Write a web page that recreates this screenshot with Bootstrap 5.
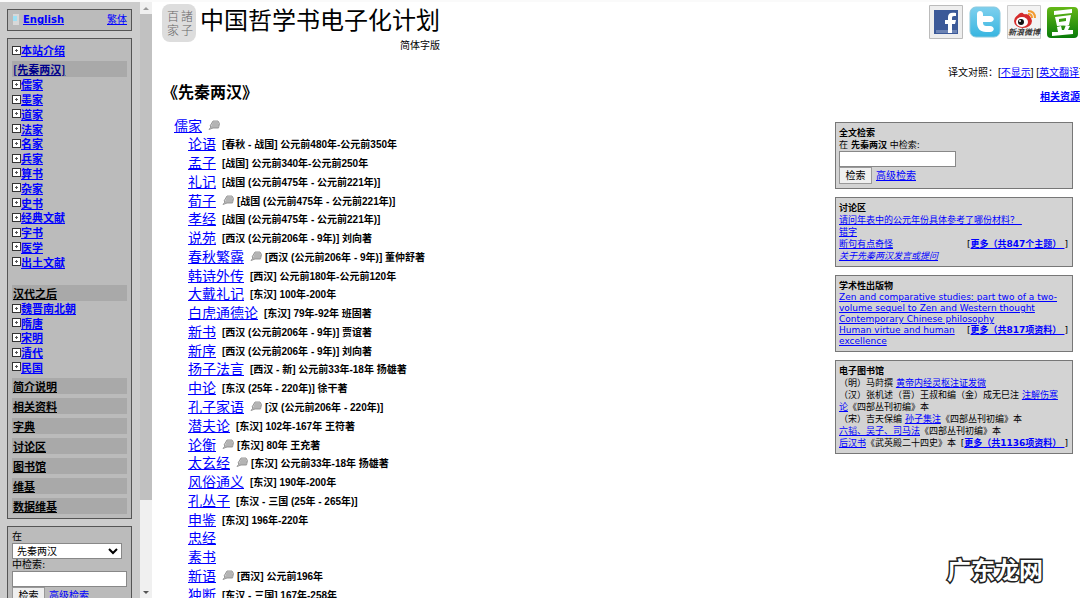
<!DOCTYPE html>
<html lang="zh-Hans">
<head>
<meta charset="utf-8">
<meta name="viewport" content="width=device-width, initial-scale=1">
<title>先秦两汉 - 中国哲学书电子化计划</title>
<link href="https://cdn.jsdelivr.net/npm/bootstrap@5.3.0/dist/css/bootstrap.min.css" rel="stylesheet">
<style>
body{font-family:"DejaVu Sans","Noto Sans CJK SC",sans-serif;font-size:10px;line-height:12px;color:#000;border-top:2px solid #fafafa}
a{color:#00f}
ul{list-style:none;margin:0;padding:0}
/* side navigation */
.side{width:140px;background:#ccc;padding:7px 8px 0 7px}
.side-box{background:#bbb;border:1px solid #555;width:125px;padding:4px;margin-bottom:7px}
.side-box.lang{height:22px;padding:0 4px}
.nodes{display:grid;grid-auto-rows:1fr;font-size:11px;font-weight:700;line-height:14px;font-family:"Noto Sans CJK SC",sans-serif}
.nodes li{display:flex;align-items:center}
.nodes-a{min-height:192px}
.nodes-b{min-height:73px}
.nodes li::before{content:"";flex:none;width:9px;height:9px;border:1px solid #333;
 background:linear-gradient(#555,#555) 50% 50%/3px 1px no-repeat,linear-gradient(#555,#555) 50% 50%/1px 3px no-repeat,#fff}
.bar{display:block;background:#a9a9a9;color:#000;font:700 11px/16px "Noto Sans CJK SC",sans-serif;padding-left:1px;margin-bottom:4px}
.bar.tight{margin-bottom:0}
.bar.current{color:#00008b}
.track{width:12px;background:#f0f0f0}
.thumb{background:#c1c1c1;height:85%}
.field{border:1px solid #888;border-radius:0;background:#fff;font:10px/12px "DejaVu Sans","Noto Sans CJK SC",sans-serif;padding:0 2px;display:block;height:16px}
select.field{width:110px;padding:0}
.query{width:117px}
.push{border:1px solid #999;background:#efefef;font:10px/12px "DejaVu Sans","Noto Sans CJK SC",sans-serif;padding:0;width:33px;height:17px}
/* page */
.zh{font-family:"Liberation Sans","Noto Sans CJK SC",sans-serif;padding-left:10px}
.site-title{font:400 24px/34px "Noto Sans CJK SC",sans-serif;margin:0}
.logo{width:34px;height:38px;margin-top:2px}
.page-title{font:700 16px/22px "Noto Sans CJK SC",sans-serif;margin:0}
.listing{padding:14px 0 0 12px}
.works{display:grid;grid-auto-rows:1fr;min-height:469px;padding-left:14px}
.works li,.school{white-space:nowrap;line-height:18px;display:flex;align-items:center}
.works a,.school a{font:400 14px/18px "Noto Sans CJK SC",sans-serif}
.works b{font:700 10px/14px "Liberation Sans","Noto Sans CJK SC",sans-serif;margin-left:6px;padding-top:4px}
.works svg,.school svg{width:12px;height:10px;margin-left:6px;flex:none}
.works svg + b{margin-left:3px}
.right{width:245px}
.social{gap:5px;padding-top:3px}
.social svg{width:34px;height:34px;display:block}
.tools{width:132px;font-size:10px;white-space:nowrap}
.panels{font-family:"DejaVu Sans","Noto Sans CJK SC",sans-serif;padding-top:3px}
.panel{background:#d3d3d3;border:1px solid #777;padding:4px 4px 4px 3px;margin:0 7px 8px 0;font-size:9px;line-height:12px}
.panel h2{font:700 9px/12px "Noto Sans CJK SC",sans-serif;margin:0}
.latin{line-height:11px}
.big{font-size:10px}
.watermark{right:37px;bottom:12px;font:700 24px/34px "Noto Sans CJK SC",sans-serif;color:#fff;-webkit-text-stroke:3px #222;paint-order:stroke fill;stroke-linejoin:round}
</style>
</head>
<body class="vh-100 overflow-hidden position-relative d-flex">
<svg class="d-none" aria-hidden="true"><symbol id="talk" viewBox="0 0 12 10"><path d="M5 1h5l1.500 2.500L10.500 8H5L1 9.500l2-2.500L2 6z" fill="#ccc" stroke="#999" stroke-width="1"/><path d="M4.500 3h6M4 5h7M3 7h7" stroke="#888" stroke-width=".7"/></symbol></svg>

<aside class="side flex-shrink-0 overflow-hidden">
 <div class="side-box lang d-flex align-items-center">
  <svg width="7" height="12" viewBox="0 0 7 12" class="me-1" aria-hidden="true"><path d="M1 0h6v11H1z" fill="#d8d8d8"/><path d="M1 2h4v5H1z" fill="#9de0f5"/></svg>
  <a href="#" class="fw-bold me-auto">English</a><a href="#">繁体</a>
 </div>
 <nav class="side-box">
  <ul class="nodes pb-1"><li><a href="#">本站介绍</a></li></ul>
  <a href="#" class="bar tight current">[先秦两汉]</a>
  <ul class="nodes nodes-a">
   <li><a href="#">儒家</a></li><li><a href="#">墨家</a></li><li><a href="#">道家</a></li><li><a href="#">法家</a></li><li><a href="#">名家</a></li><li><a href="#">兵家</a></li><li><a href="#">算书</a></li><li><a href="#">杂家</a></li><li><a href="#">史书</a></li><li><a href="#">经典文献</a></li><li><a href="#">字书</a></li><li><a href="#">医学</a></li><li><a href="#">出土文献</a></li>
  </ul>
  <a href="#" class="bar tight mt-3">汉代之后</a>
  <ul class="nodes nodes-b mb-1">
   <li><a href="#">魏晋南北朝</a></li><li><a href="#">隋唐</a></li><li><a href="#">宋明</a></li><li><a href="#">清代</a></li><li><a href="#">民国</a></li>
  </ul>
  <a href="#" class="bar">简介说明</a><a href="#" class="bar">相关资料</a><a href="#" class="bar">字典</a><a href="#" class="bar">讨论区</a><a href="#" class="bar">图书馆</a><a href="#" class="bar">维基</a><a href="#" class="bar mb-0">数据维基</a>
 </nav>
 <form class="side-box">
  <label for="scope" class="d-block">在</label>
  <select id="scope" class="field"><option>先秦两汉</option></select>
  <label for="sideq" class="d-block">中检索:</label>
  <input id="sideq" type="text" class="field w-100">
  <div class="d-flex align-items-center gap-1"><button type="button" class="push">检索</button><a href="#">高级检索</a></div>
 </form>
</aside>
<div class="track flex-shrink-0 d-flex flex-column" aria-hidden="true">
 <svg width="12" height="12" viewBox="0 0 12 12"><path d="M3 8l3-3 3 3z" fill="#999"/></svg>
 <div class="flex-grow-1"><div class="thumb"></div></div>
 <svg width="12" height="12" viewBox="0 0 12 12"><path d="M3 5h6L6 8z" fill="#555"/></svg>
</div>

<main class="flex-grow-1 zh d-flex">
 <div class="flex-grow-1">
  <header class="d-inline-flex">
   <svg class="logo me-1" viewBox="0 0 34 38" role="img" aria-label="诸子百家"><rect width="34" height="38" rx="8" fill="#ddd"/><g font-family="Noto Sans CJK TC, sans-serif" font-size="12" font-weight="300" fill="#666"><text x="5" y="17">百</text><text x="19" y="17">諸</text><text x="5" y="31">家</text><text x="19" y="31">子</text></g></svg>
   <div class="text-end"><h1 class="site-title">中国哲学书电子化计划</h1><div class="pt-1">简体字版</div></div>
  </header>
  <h2 class="page-title mt-4 pt-1">《先秦两汉》</h2>
  <div class="listing">
   <div class="school"><a href="#">儒家</a><svg><use href="#talk"/></svg></div>
   <ul class="works">
    <li><a href="#">论语</a><b>[春秋 - 战国] 公元前480年-公元前350年</b></li>
    <li><a href="#">孟子</a><b>[战国] 公元前340年-公元前250年</b></li>
    <li><a href="#">礼记</a><b>[战国 (公元前475年 - 公元前221年)]</b></li>
    <li><a href="#">荀子</a><svg><use href="#talk"/></svg><b>[战国 (公元前475年 - 公元前221年)]</b></li>
    <li><a href="#">孝经</a><b>[战国 (公元前475年 - 公元前221年)]</b></li>
    <li><a href="#">说苑</a><b>[西汉 (公元前206年 - 9年)] 刘向著</b></li>
    <li><a href="#">春秋繁露</a><svg><use href="#talk"/></svg><b>[西汉 (公元前206年 - 9年)] 董仲舒著</b></li>
    <li><a href="#">韩诗外传</a><b>[西汉] 公元前180年-公元前120年</b></li>
    <li><a href="#">大戴礼记</a><b>[东汉] 100年-200年</b></li>
    <li><a href="#">白虎通德论</a><b>[东汉] 79年-92年 班固著</b></li>
    <li><a href="#">新书</a><b>[西汉 (公元前206年 - 9年)] 贾谊著</b></li>
    <li><a href="#">新序</a><b>[西汉 (公元前206年 - 9年)] 刘向著</b></li>
    <li><a href="#">扬子法言</a><b>[西汉 - 新] 公元前33年-18年 扬雄著</b></li>
    <li><a href="#">中论</a><b>[东汉 (25年 - 220年)] 徐干著</b></li>
    <li><a href="#">孔子家语</a><svg><use href="#talk"/></svg><b>[汉 (公元前206年 - 220年)]</b></li>
    <li><a href="#">潜夫论</a><b>[东汉] 102年-167年 王符著</b></li>
    <li><a href="#">论衡</a><svg><use href="#talk"/></svg><b>[东汉] 80年 王充著</b></li>
    <li><a href="#">太玄经</a><svg><use href="#talk"/></svg><b>[东汉] 公元前33年-18年 扬雄著</b></li>
    <li><a href="#">风俗通义</a><b>[东汉] 190年-200年</b></li>
    <li><a href="#">孔丛子</a><b>[东汉 - 三国 (25年 - 265年)]</b></li>
    <li><a href="#">申鉴</a><b>[东汉] 196年-220年</b></li>
    <li><a href="#">忠经</a></li>
    <li><a href="#">素书</a></li>
    <li><a href="#">新语</a><svg><use href="#talk"/></svg><b>[西汉] 公元前196年</b></li>
    <li><a href="#">独断</a><b>[东汉 - 三国] 167年-258年</b></li>
   </ul>
  </div>
 </div>

 <div class="right flex-shrink-0">
  <div class="social d-flex justify-content-end">
   <a href="#" aria-label="Facebook"><svg viewBox="0 0 34 34"><path d="M.5.5h33v33H.5z" fill="#eee" stroke="#bbb"/><path d="M5 5h24v24H5z" fill="#3b5998"/><path d="M7 25h21v3H7z" fill="#6d84b4"/><path d="M19 28V19h-3v-4h3v-3c0-4 3-5 8-4v3c-3 0-4 0-4 2v2h4l-1 4h-3v9z" fill="#fff"/></svg></a>
   <a href="#" aria-label="Twitter"><svg viewBox="0 0 34 34"><defs><linearGradient id="tw" x2="0" y2="1"><stop stop-color="#7ed0ee"/><stop offset="1" stop-color="#37b5e0"/></linearGradient></defs><rect x="2" y="2" width="30" height="30" rx="6" fill="url(#tw)" stroke="#8ac8dd"/><path d="M9 9c0-4 6-4 6 0v2h7c5 0 5 6 0 6h-7c0 3 1 4 4 4h3c5 0 5 6 0 6h-4c-6 0-9-4-9-9z" fill="#fff"/></svg></a>
   <a href="#" aria-label="新浪微博"><svg viewBox="0 0 34 34"><path d="M.5.5h33v33H.5z" fill="#f3f3f3" stroke="#ccc"/><ellipse cx="16" cy="16" rx="9" ry="7" fill="#d52b2b"/><path d="M9 13q3-6 7-5l1 2q5-2 6 2" fill="#d52b2b"/><ellipse cx="15" cy="17" rx="6" ry="5" fill="#fff"/><circle cx="14" cy="17" r="3" fill="#111"/><circle cx="13" cy="16" r="1" fill="#fff"/><path d="M21 9q4 0 4 4M21 6q7 0 7 7" fill="none" stroke="#f39b31" stroke-width="2"/><text x="1" y="30" font-family="Noto Sans CJK SC" font-size="8" font-weight="700" font-style="italic" fill="#333">新浪微博</text></svg></a>
   <a href="#" aria-label="豆瓣"><svg viewBox="0 0 34 34"><defs><linearGradient id="db" x2="0" y2="1"><stop stop-color="#65b817"/><stop offset="1" stop-color="#087b09"/></linearGradient></defs><rect x="1" y="2" width="31" height="31" rx="4" fill="url(#db)"/><path fill-rule="evenodd" d="M8 6l18-2v4L8 10zM9 12l16-2-2 10-12 1zM13 14v3l7-1v-3zM11 22l4-1 1 4h2l2-5 4 1-2 4h5v4L6 31v-4h6z" fill="#fff"/></svg></a>
  </div>
  <div class="tools ms-auto mt-4 pt-1"><div>译文对照：[<a href="#">不显示</a>] [<a href="#">英文翻译</a>]</div></div>
  <div class="text-end mt-2 pt-1 mb-3"><a href="#" class="fw-bold">相关资源</a></div>

  <div class="panels">
   <form class="panel">
    <h2>全文检索</h2>
    <label for="q" class="d-block">在 <b>先秦两汉</b> 中检索:</label>
    <input id="q" type="text" class="field query">
    <div class="d-flex align-items-center gap-1"><button type="button" class="push">检索</button><a href="#" class="big">高级检索</a></div>
   </form>
   <section class="panel">
    <h2>讨论区</h2>
    <a href="#">请问年表中的公元年份具体参考了哪份材料？&nbsp;</a><br>
    <a href="#">错字</a><br>
    <span class="float-end">[<a href="#" class="fw-bold">更多（共847个主题）&nbsp;</a>]</span><a href="#">断句有点奇怪</a><br>
    <a href="#" class="fst-italic">关于先秦两汉发言或提问</a>
   </section>
   <section class="panel latin">
    <h2>学术性出版物</h2>
    <a href="#">Zen and comparative studies: part two of a two-volume sequel to Zen and Western thought</a><br>
    <a href="#">Contemporary Chinese philosophy</a><br>
    <span class="float-end">[<a href="#" class="fw-bold">更多（共817项资料）&nbsp;</a>]</span><a href="#">Human virtue and human excellence</a>
   </section>
   <section class="panel">
    <h2>电子图书馆</h2>
    （明）马莳撰 <a href="#">黄帝内经灵枢注证发微</a><br>
    （汉）张机述（晋）王叔和编（金）成无巳注 <a href="#">注解伤寒<br>论</a>《四部丛刊初编》本<br>
    （宋）吉天保编 <a href="#">孙子集注</a>《四部丛刊初编》本<br>
    <a href="#">六韬、吴子、司马法</a>《四部丛刊初编》本<br>
    <span class="float-end">[<a href="#" class="fw-bold">更多（共1136项资料）&nbsp;</a>]</span><a href="#">后汉书</a>《武英殿二十四史》本
   </section>
  </div>
 </div>
</main>
<div class="watermark position-absolute">广东龙网</div>
<script src="https://cdn.jsdelivr.net/npm/bootstrap@5.3.0/dist/js/bootstrap.bundle.min.js"></script>
</body>
</html>
